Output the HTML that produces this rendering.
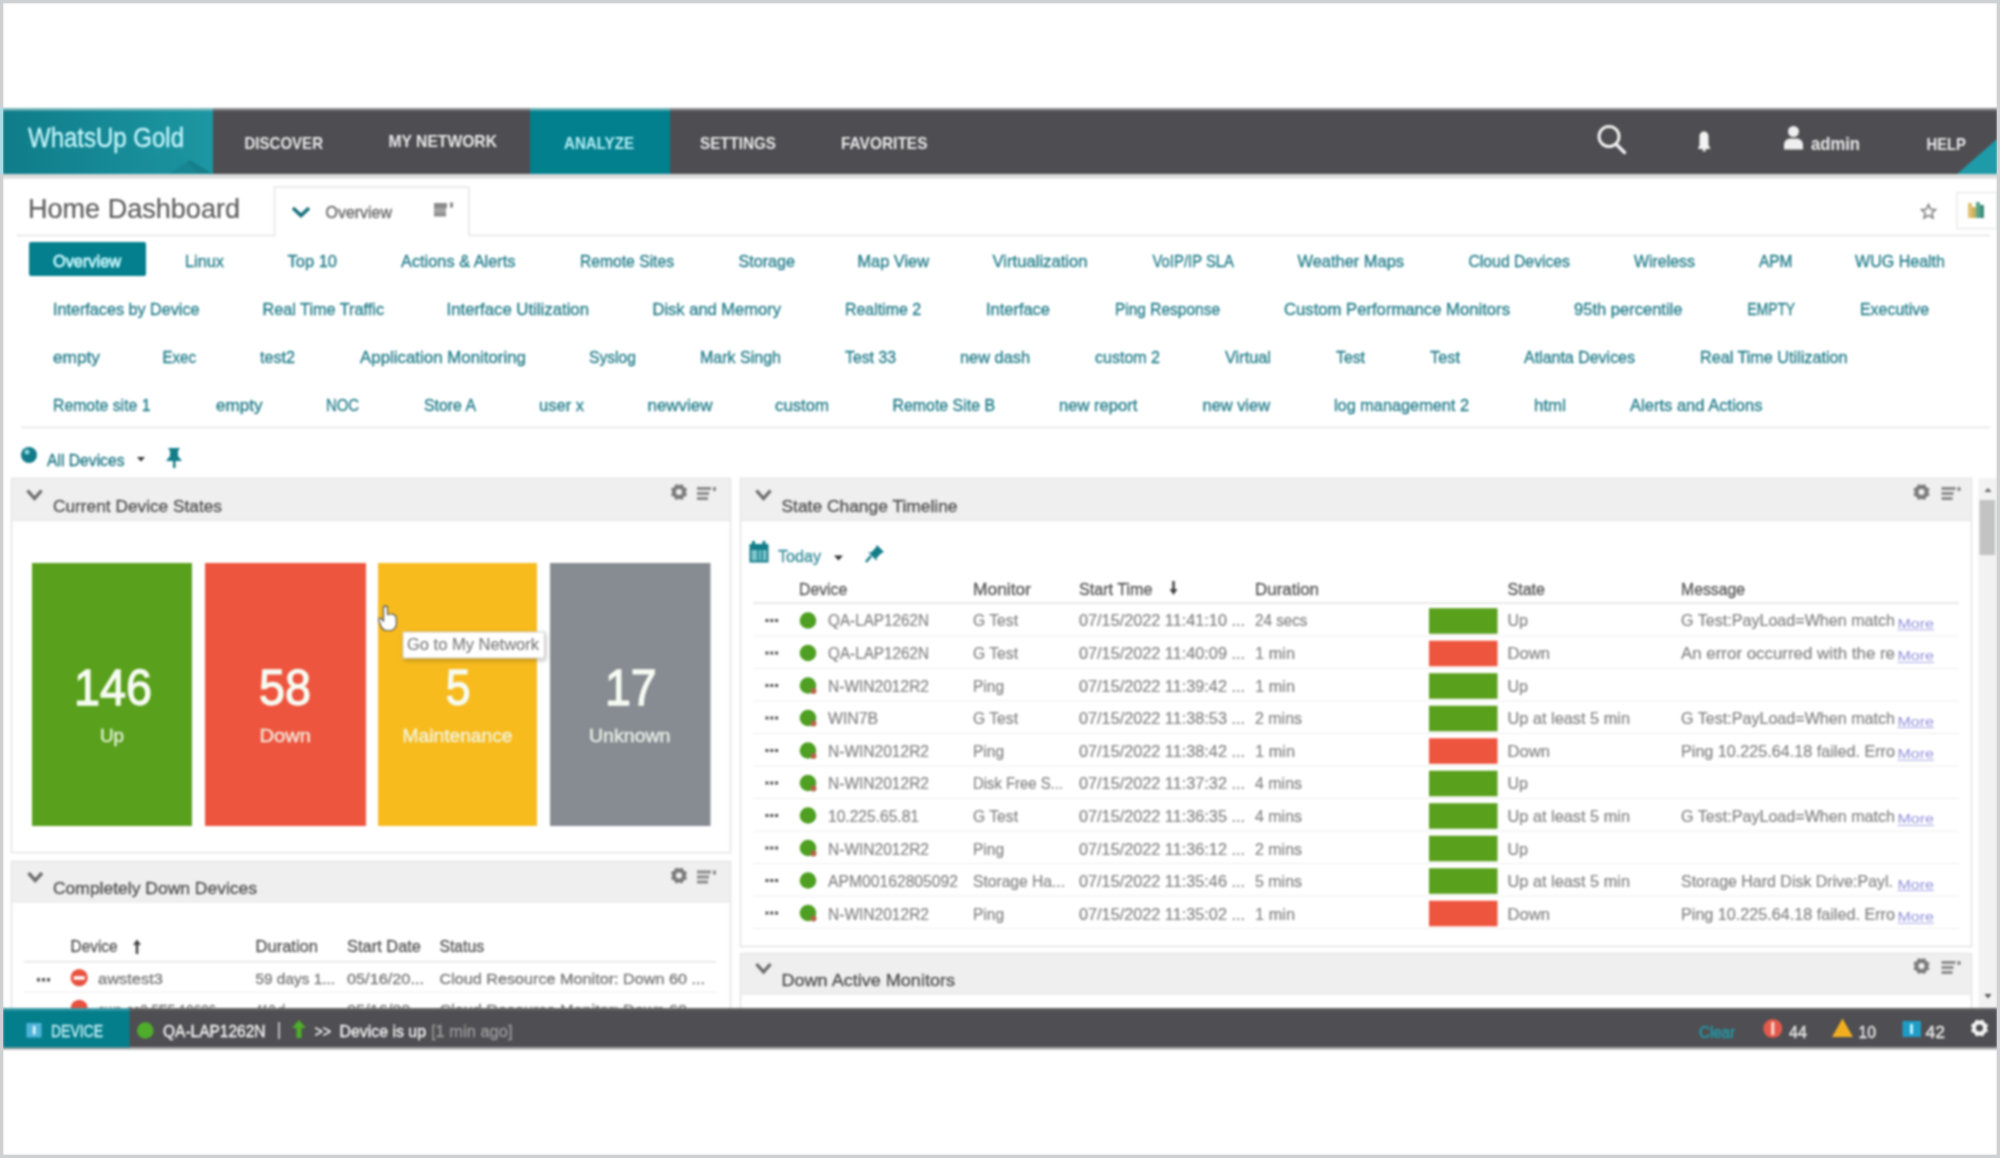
<!DOCTYPE html>
<html><head><meta charset="utf-8"><title>WhatsUp Gold - Home Dashboard</title>
<style>
html,body{margin:0;padding:0;background:#fff;overflow:hidden;width:2000px;height:1158px;position:relative;}
svg{display:block;font-family:"Liberation Sans", sans-serif;filter:blur(1px);}
.fr{position:absolute;left:0;top:0;width:1994px;height:1152px;border:3px solid #cdd1d4;}
.nl{position:absolute;left:0;top:108px;width:3px;height:66px;background:#a9dce6;}
</style></head><body>
<svg width="2000" height="1158" viewBox="0 0 2000 1158" font-family='"Liberation Sans", sans-serif'>
<rect x="0" y="0" width="2000.00" height="1158.00" fill="#ffffff"/>
<defs>
<linearGradient id="lg" x1="0" y1="0" x2="1" y2="0">
<stop offset="0" stop-color="#0f7c89"/><stop offset="1" stop-color="#1d97a3"/></linearGradient>
<filter id="sh" x="-10%" y="-20%" width="130%" height="160%"><feDropShadow dx="1" dy="2" stdDeviation="2" flood-color="#000" flood-opacity="0.25"/></filter>
</defs>
<rect x="3" y="108" width="1994.00" height="66.00" fill="#4e4d51"/>
<rect x="3" y="108" width="1994.00" height="2.50" fill="#8c8c8e"/>
<rect x="3" y="174" width="1994.00" height="4.50" fill="#dcdcdc"/>
<rect x="3" y="108" width="210.00" height="66.00" fill="url(#lg)"/>
<rect x="3" y="108" width="210.00" height="2.50" fill="#7fb9bd"/>
<polygon points="168,174 190,160 213,174" fill="#157f8b"/>
<polygon points="120,174 170,150 200,174" fill="#1a8d99" opacity="0.5"/>
<rect x="530" y="108" width="140.00" height="66.00" fill="#03808e"/>
<rect x="530" y="108" width="140.00" height="2.50" fill="#6fb3b9"/>
<polygon points="1957,174 1997,139 1997,174" fill="#1f9aa8"/>
<text x="28" y="147" font-size="27" fill="#c6f6fc" textLength="156.0" lengthAdjust="spacingAndGlyphs" stroke="#c6f6fc" stroke-width="0.3">WhatsUp Gold</text>
<text x="244.5" y="149" font-size="17" fill="#e8e8e8" font-weight="bold" textLength="78.5" lengthAdjust="spacingAndGlyphs">DISCOVER</text>
<text x="388.5" y="147.3" font-size="17" fill="#e8e8e8" font-weight="bold" textLength="108.5" lengthAdjust="spacingAndGlyphs">MY NETWORK</text>
<text x="564" y="149" font-size="17" fill="#b5eef5" font-weight="bold" textLength="70.0" lengthAdjust="spacingAndGlyphs">ANALYZE</text>
<text x="700" y="149" font-size="17" fill="#e8e8e8" font-weight="bold" textLength="76.0" lengthAdjust="spacingAndGlyphs">SETTINGS</text>
<text x="841" y="149" font-size="17" fill="#e8e8e8" font-weight="bold" textLength="86.5" lengthAdjust="spacingAndGlyphs">FAVORITES</text>
<text x="1811" y="149.5" font-size="18" fill="#e8e8e8" font-weight="bold" textLength="49.0" lengthAdjust="spacingAndGlyphs">admin</text>
<text x="1926.5" y="149.5" font-size="17" fill="#e8e8e8" font-weight="bold" textLength="39.5" lengthAdjust="spacingAndGlyphs">HELP</text>
<circle cx="1609" cy="136.5" r="10" fill="none" stroke="#f0f0f0" stroke-width="3"/>
<line x1="1616" y1="144" x2="1624.5" y2="152.5" stroke="#f0f0f0" stroke-width="3.5" stroke-linecap="round"/>
<path d="M1698,149 L1699.5,145 L1699.5,136 Q1700,131.5 1704,131.5 Q1708,131.5 1708.5,136 L1708.5,145 L1710.5,149 Z" fill="#f2f2f2"/>
<rect x="1702.5" y="149" width="3.50" height="2.50" fill="#d8d8d8"/>
<circle cx="1793.5" cy="131.5" r="5.5" fill="#eeeeee"/>
<path d="M1784,149.5 L1784,144 Q1785,139 1790,138.5 L1797,138.5 Q1802,139 1803,144 L1803,149.5 Z" fill="#eeeeee"/>
<text x="28" y="218" font-size="27" fill="#5e5e5e" textLength="212.0" lengthAdjust="spacingAndGlyphs" stroke="#5e5e5e" stroke-width="0.2">Home Dashboard</text>
<path d="M17,235.5 L274.5,235.5 L274.5,187 L469,187 L469,235.5 L1990,235.5" fill="none" stroke="#ebebeb" stroke-width="2"/>
<path d="M293,208 L301,215.5 L309,208" fill="none" stroke="#17707c" stroke-width="3.5"/>
<text x="325.5" y="218" font-size="16.5" fill="#666" textLength="66.5" lengthAdjust="spacingAndGlyphs" stroke="#666" stroke-width="0.35">Overview</text>
<rect x="434" y="203" width="13.00" height="5.00" fill="#8a8a8a"/>
<rect x="434" y="208" width="12.00" height="5.00" fill="#a5a5a5"/>
<rect x="434" y="213" width="12.00" height="3.50" fill="#8f8f8f"/>
<rect x="450" y="202.5" width="3.00" height="5.00" fill="#888"/>
<path d="M1928.5,204.5 L1930.6,209.3 L1935.5,209.7 L1931.8,213 L1933,218 L1928.5,215.3 L1924,218 L1925.2,213 L1921.5,209.7 L1926.4,209.3 Z" fill="none" stroke="#7a7a7a" stroke-width="1.5"/>
<rect x="1957" y="192.5" width="40" height="36" fill="#fff" stroke="#ebebeb" stroke-width="1.5"/>
<rect x="1968" y="203" width="4.00" height="15.00" fill="#e0c070"/>
<rect x="1972" y="207" width="4.00" height="11.00" fill="#c9b060"/>
<rect x="1976" y="202" width="4.00" height="16.00" fill="#5aa888"/>
<rect x="1980" y="205" width="4.00" height="13.00" fill="#3d8f80"/>
<rect x="29" y="242" width="117.00" height="34.00" fill="#047f8d" rx="2"/>
<text x="53" y="267" font-size="17" fill="#c4f5fb" textLength="68.0" lengthAdjust="spacingAndGlyphs" stroke="#c4f5fb" stroke-width="0.8">Overview</text>
<text x="185" y="267" font-size="17" fill="#267f8c" textLength="39.0" lengthAdjust="spacingAndGlyphs" stroke="#267f8c" stroke-width="0.35">Linux</text>
<text x="287.5" y="267" font-size="17" fill="#267f8c" textLength="49.5" lengthAdjust="spacingAndGlyphs" stroke="#267f8c" stroke-width="0.35">Top 10</text>
<text x="401" y="267" font-size="17" fill="#267f8c" textLength="114.5" lengthAdjust="spacingAndGlyphs" stroke="#267f8c" stroke-width="0.35">Actions &amp; Alerts</text>
<text x="580" y="267" font-size="17" fill="#267f8c" textLength="94.0" lengthAdjust="spacingAndGlyphs" stroke="#267f8c" stroke-width="0.35">Remote Sites</text>
<text x="738.5" y="267" font-size="17" fill="#267f8c" textLength="56.5" lengthAdjust="spacingAndGlyphs" stroke="#267f8c" stroke-width="0.35">Storage</text>
<text x="857.5" y="267" font-size="17" fill="#267f8c" textLength="71.5" lengthAdjust="spacingAndGlyphs" stroke="#267f8c" stroke-width="0.35">Map View</text>
<text x="992.5" y="267" font-size="17" fill="#267f8c" textLength="95.0" lengthAdjust="spacingAndGlyphs" stroke="#267f8c" stroke-width="0.35">Virtualization</text>
<text x="1152.5" y="267" font-size="17" fill="#267f8c" textLength="81.5" lengthAdjust="spacingAndGlyphs" stroke="#267f8c" stroke-width="0.35">VoIP/IP SLA</text>
<text x="1297.5" y="267" font-size="17" fill="#267f8c" textLength="106.5" lengthAdjust="spacingAndGlyphs" stroke="#267f8c" stroke-width="0.35">Weather Maps</text>
<text x="1468.5" y="267" font-size="17" fill="#267f8c" textLength="101.5" lengthAdjust="spacingAndGlyphs" stroke="#267f8c" stroke-width="0.35">Cloud Devices</text>
<text x="1634" y="267" font-size="17" fill="#267f8c" textLength="61.0" lengthAdjust="spacingAndGlyphs" stroke="#267f8c" stroke-width="0.35">Wireless</text>
<text x="1759" y="267" font-size="17" fill="#267f8c" textLength="33.5" lengthAdjust="spacingAndGlyphs" stroke="#267f8c" stroke-width="0.35">APM</text>
<text x="1855" y="267" font-size="17" fill="#267f8c" textLength="90.0" lengthAdjust="spacingAndGlyphs" stroke="#267f8c" stroke-width="0.35">WUG Health</text>
<text x="53" y="315" font-size="17" fill="#267f8c" textLength="146.5" lengthAdjust="spacingAndGlyphs" stroke="#267f8c" stroke-width="0.35">Interfaces by Device</text>
<text x="262.5" y="315" font-size="17" fill="#267f8c" textLength="121.5" lengthAdjust="spacingAndGlyphs" stroke="#267f8c" stroke-width="0.35">Real Time Traffic</text>
<text x="446.5" y="315" font-size="17" fill="#267f8c" textLength="142.5" lengthAdjust="spacingAndGlyphs" stroke="#267f8c" stroke-width="0.35">Interface Utilization</text>
<text x="652.5" y="315" font-size="17" fill="#267f8c" textLength="128.5" lengthAdjust="spacingAndGlyphs" stroke="#267f8c" stroke-width="0.35">Disk and Memory</text>
<text x="845" y="315" font-size="17" fill="#267f8c" textLength="76.0" lengthAdjust="spacingAndGlyphs" stroke="#267f8c" stroke-width="0.35">Realtime 2</text>
<text x="986" y="315" font-size="17" fill="#267f8c" textLength="64.0" lengthAdjust="spacingAndGlyphs" stroke="#267f8c" stroke-width="0.35">Interface</text>
<text x="1115" y="315" font-size="17" fill="#267f8c" textLength="105.0" lengthAdjust="spacingAndGlyphs" stroke="#267f8c" stroke-width="0.35">Ping Response</text>
<text x="1284" y="315" font-size="17" fill="#267f8c" textLength="226.0" lengthAdjust="spacingAndGlyphs" stroke="#267f8c" stroke-width="0.35">Custom Performance Monitors</text>
<text x="1574" y="315" font-size="17" fill="#267f8c" textLength="108.5" lengthAdjust="spacingAndGlyphs" stroke="#267f8c" stroke-width="0.35">95th percentile</text>
<text x="1747.5" y="315" font-size="17" fill="#267f8c" textLength="47.5" lengthAdjust="spacingAndGlyphs" stroke="#267f8c" stroke-width="0.35">EMPTY</text>
<text x="1860" y="315" font-size="17" fill="#267f8c" textLength="69.0" lengthAdjust="spacingAndGlyphs" stroke="#267f8c" stroke-width="0.35">Executive</text>
<text x="53" y="363" font-size="17" fill="#267f8c" textLength="47.0" lengthAdjust="spacingAndGlyphs" stroke="#267f8c" stroke-width="0.35">empty</text>
<text x="162.5" y="363" font-size="17" fill="#267f8c" textLength="33.5" lengthAdjust="spacingAndGlyphs" stroke="#267f8c" stroke-width="0.35">Exec</text>
<text x="260" y="363" font-size="17" fill="#267f8c" textLength="35.0" lengthAdjust="spacingAndGlyphs" stroke="#267f8c" stroke-width="0.35">test2</text>
<text x="360" y="363" font-size="17" fill="#267f8c" textLength="166.0" lengthAdjust="spacingAndGlyphs" stroke="#267f8c" stroke-width="0.35">Application Monitoring</text>
<text x="589" y="363" font-size="17" fill="#267f8c" textLength="47.0" lengthAdjust="spacingAndGlyphs" stroke="#267f8c" stroke-width="0.35">Syslog</text>
<text x="700" y="363" font-size="17" fill="#267f8c" textLength="81.0" lengthAdjust="spacingAndGlyphs" stroke="#267f8c" stroke-width="0.35">Mark Singh</text>
<text x="845" y="363" font-size="17" fill="#267f8c" textLength="51.0" lengthAdjust="spacingAndGlyphs" stroke="#267f8c" stroke-width="0.35">Test 33</text>
<text x="960" y="363" font-size="17" fill="#267f8c" textLength="70.0" lengthAdjust="spacingAndGlyphs" stroke="#267f8c" stroke-width="0.35">new dash</text>
<text x="1095" y="363" font-size="17" fill="#267f8c" textLength="65.0" lengthAdjust="spacingAndGlyphs" stroke="#267f8c" stroke-width="0.35">custom 2</text>
<text x="1225" y="363" font-size="17" fill="#267f8c" textLength="46.0" lengthAdjust="spacingAndGlyphs" stroke="#267f8c" stroke-width="0.35">Virtual</text>
<text x="1336" y="363" font-size="17" fill="#267f8c" textLength="29.0" lengthAdjust="spacingAndGlyphs" stroke="#267f8c" stroke-width="0.35">Test</text>
<text x="1430" y="363" font-size="17" fill="#267f8c" textLength="30.0" lengthAdjust="spacingAndGlyphs" stroke="#267f8c" stroke-width="0.35">Test</text>
<text x="1524" y="363" font-size="17" fill="#267f8c" textLength="111.0" lengthAdjust="spacingAndGlyphs" stroke="#267f8c" stroke-width="0.35">Atlanta Devices</text>
<text x="1700" y="363" font-size="17" fill="#267f8c" textLength="147.5" lengthAdjust="spacingAndGlyphs" stroke="#267f8c" stroke-width="0.35">Real Time Utilization</text>
<text x="53" y="411" font-size="17" fill="#267f8c" textLength="97.5" lengthAdjust="spacingAndGlyphs" stroke="#267f8c" stroke-width="0.35">Remote site 1</text>
<text x="216" y="411" font-size="17" fill="#267f8c" textLength="46.5" lengthAdjust="spacingAndGlyphs" stroke="#267f8c" stroke-width="0.35">empty</text>
<text x="326" y="411" font-size="17" fill="#267f8c" textLength="33.0" lengthAdjust="spacingAndGlyphs" stroke="#267f8c" stroke-width="0.35">NOC</text>
<text x="424" y="411" font-size="17" fill="#267f8c" textLength="52.0" lengthAdjust="spacingAndGlyphs" stroke="#267f8c" stroke-width="0.35">Store A</text>
<text x="539" y="411" font-size="17" fill="#267f8c" textLength="45.0" lengthAdjust="spacingAndGlyphs" stroke="#267f8c" stroke-width="0.35">user x</text>
<text x="647.5" y="411" font-size="17" fill="#267f8c" textLength="65.0" lengthAdjust="spacingAndGlyphs" stroke="#267f8c" stroke-width="0.35">newview</text>
<text x="775" y="411" font-size="17" fill="#267f8c" textLength="54.0" lengthAdjust="spacingAndGlyphs" stroke="#267f8c" stroke-width="0.35">custom</text>
<text x="892.5" y="411" font-size="17" fill="#267f8c" textLength="102.5" lengthAdjust="spacingAndGlyphs" stroke="#267f8c" stroke-width="0.35">Remote Site B</text>
<text x="1059" y="411" font-size="17" fill="#267f8c" textLength="78.5" lengthAdjust="spacingAndGlyphs" stroke="#267f8c" stroke-width="0.35">new report</text>
<text x="1202.5" y="411" font-size="17" fill="#267f8c" textLength="67.5" lengthAdjust="spacingAndGlyphs" stroke="#267f8c" stroke-width="0.35">new view</text>
<text x="1334" y="411" font-size="17" fill="#267f8c" textLength="135.0" lengthAdjust="spacingAndGlyphs" stroke="#267f8c" stroke-width="0.35">log management 2</text>
<text x="1534" y="411" font-size="17" fill="#267f8c" textLength="32.0" lengthAdjust="spacingAndGlyphs" stroke="#267f8c" stroke-width="0.35">html</text>
<text x="1630" y="411" font-size="17" fill="#267f8c" textLength="132.5" lengthAdjust="spacingAndGlyphs" stroke="#267f8c" stroke-width="0.35">Alerts and Actions</text>
<line x1="21" y1="427.5" x2="1990" y2="427.5" stroke="#ececec" stroke-width="2"/>
<circle cx="29" cy="455" r="8" fill="#127b88"/>
<circle cx="27" cy="452" r="2.5" fill="#8fd8df"/>
<text x="47" y="465.5" font-size="16.5" fill="#217a88" textLength="77.5" lengthAdjust="spacingAndGlyphs" stroke="#217a88" stroke-width="0.35">All Devices</text>
<polygon points="137,457 145,457 141,461.5" fill="#333"/>
<path d="M168,448 L180,448 L178,451 L178,456 L182,461 L166,461 L170,456 L170,451 Z" fill="#137d8a"/><rect x="173" y="461" width="2.5" height="7" fill="#137d8a"/>
<rect x="11.5" y="478.5" width="719" height="374" fill="#fff" stroke="#e3e3e3" stroke-width="1.5"/>
<rect x="12" y="479" width="718.00" height="41.50" fill="#efefef"/>
<line x1="12" y1="520.5" x2="730" y2="520.5" stroke="#e6e6e6" stroke-width="1"/>
<path d="M27.5,490.5 L34.5,498.5 L41.5,490.5" fill="none" stroke="#6e6e6e" stroke-width="3.4"/>
<text x="53" y="512.4" font-size="16.5" fill="#555" textLength="169.0" lengthAdjust="spacingAndGlyphs" stroke="#555" stroke-width="0.35">Current Device States</text>
<circle cx="679" cy="492" r="5.10" fill="none" stroke="#7c7c7c" stroke-width="4.2"/>
<circle cx="685.37" cy="494.64" r="1.5" fill="#7c7c7c"/>
<circle cx="681.64" cy="498.37" r="1.5" fill="#7c7c7c"/>
<circle cx="676.36" cy="498.37" r="1.5" fill="#7c7c7c"/>
<circle cx="672.63" cy="494.64" r="1.5" fill="#7c7c7c"/>
<circle cx="672.63" cy="489.36" r="1.5" fill="#7c7c7c"/>
<circle cx="676.36" cy="485.63" r="1.5" fill="#7c7c7c"/>
<circle cx="681.64" cy="485.63" r="1.5" fill="#7c7c7c"/>
<circle cx="685.37" cy="489.36" r="1.5" fill="#7c7c7c"/>
<rect x="697" y="487.0" width="14.00" height="3.00" fill="#8a8a8a"/>
<rect x="697" y="492.0" width="12.00" height="3.00" fill="#8a8a8a"/>
<rect x="697" y="497.0" width="11.00" height="3.00" fill="#8a8a8a"/>
<rect x="713" y="487.0" width="3.00" height="4.00" fill="#8a8a8a"/>
<rect x="32" y="563" width="160.00" height="263.00" fill="#59a01c"/>
<text x="74" y="704.6" font-size="50" fill="#f6fbf2" textLength="78.0" lengthAdjust="spacingAndGlyphs" stroke="#f6fbf2" stroke-width="1.3">146</text>
<text x="100" y="741.6" font-size="18" fill="#f2f9ee" textLength="24.0" lengthAdjust="spacingAndGlyphs" opacity="0.88" stroke="#f2f9ee" stroke-width="0.45">Up</text>
<rect x="205" y="563" width="161.00" height="263.00" fill="#ee553e"/>
<text x="259" y="704.6" font-size="50" fill="#f6fbf2" textLength="52.0" lengthAdjust="spacingAndGlyphs" stroke="#f6fbf2" stroke-width="1.3">58</text>
<text x="259.5" y="741.6" font-size="18" fill="#f2f9ee" textLength="51.5" lengthAdjust="spacingAndGlyphs" opacity="0.88" stroke="#f2f9ee" stroke-width="0.45">Down</text>
<rect x="378" y="563" width="159.00" height="263.00" fill="#f7bb1e"/>
<text x="445.8" y="704.6" font-size="50" fill="#f6fbf2" textLength="24.8" lengthAdjust="spacingAndGlyphs" stroke="#f6fbf2" stroke-width="1.3">5</text>
<text x="402.5" y="741.6" font-size="18" fill="#f2f9ee" textLength="110.0" lengthAdjust="spacingAndGlyphs" opacity="0.88" stroke="#f2f9ee" stroke-width="0.45">Maintenance</text>
<rect x="550" y="563" width="160.50" height="263.00" fill="#878c93"/>
<text x="605" y="704.6" font-size="50" fill="#f6fbf2" textLength="51.7" lengthAdjust="spacingAndGlyphs" stroke="#f6fbf2" stroke-width="1.3">17</text>
<text x="589" y="741.6" font-size="18" fill="#f2f9ee" textLength="81.5" lengthAdjust="spacingAndGlyphs" opacity="0.88" stroke="#f2f9ee" stroke-width="0.45">Unknown</text>
<rect x="403" y="632" width="141.5" height="26" fill="#fff" stroke="#cfcfcf" stroke-width="1" filter="url(#sh)"/>
<text x="407" y="649.8" font-size="16.5" fill="#7a7a7a" textLength="132.0" lengthAdjust="spacingAndGlyphs" stroke="#7a7a7a" stroke-width="0.1">Go to My Network</text>
<path d="M383.5,607 Q385.5,605 387.5,607 L387.5,614.5 L391,614 Q393,613.5 394,615 L396,616 L396.5,624 Q395.5,629.5 391,630.5 L385.5,630.5 Q381.5,629 380.5,625 L378.5,620 Q378.5,617.5 381,618.5 L383.5,621 Z" fill="#fff" stroke="#555" stroke-width="1.2"/>
<rect x="11.5" y="861.5" width="719" height="148" fill="#fff" stroke="#e3e3e3" stroke-width="1.5"/>
<rect x="12" y="862" width="718.00" height="40.00" fill="#efefef"/>
<line x1="12" y1="902" x2="730" y2="902" stroke="#e6e6e6" stroke-width="1"/>
<path d="M28.5,873.0 L35.25,880.5 L42.0,873.0" fill="none" stroke="#6e6e6e" stroke-width="3.4"/>
<text x="53" y="894.4" font-size="16.5" fill="#555" textLength="204.0" lengthAdjust="spacingAndGlyphs" stroke="#555" stroke-width="0.35">Completely Down Devices</text>
<circle cx="679" cy="875.5" r="5.10" fill="none" stroke="#7c7c7c" stroke-width="4.2"/>
<circle cx="685.37" cy="878.14" r="1.5" fill="#7c7c7c"/>
<circle cx="681.64" cy="881.87" r="1.5" fill="#7c7c7c"/>
<circle cx="676.36" cy="881.87" r="1.5" fill="#7c7c7c"/>
<circle cx="672.63" cy="878.14" r="1.5" fill="#7c7c7c"/>
<circle cx="672.63" cy="872.86" r="1.5" fill="#7c7c7c"/>
<circle cx="676.36" cy="869.13" r="1.5" fill="#7c7c7c"/>
<circle cx="681.64" cy="869.13" r="1.5" fill="#7c7c7c"/>
<circle cx="685.37" cy="872.86" r="1.5" fill="#7c7c7c"/>
<rect x="697" y="870.5" width="14.00" height="3.00" fill="#8a8a8a"/>
<rect x="697" y="875.5" width="12.00" height="3.00" fill="#8a8a8a"/>
<rect x="697" y="880.5" width="11.00" height="3.00" fill="#8a8a8a"/>
<rect x="713" y="870.5" width="3.00" height="4.00" fill="#8a8a8a"/>
<text x="70.5" y="952.3" font-size="16.5" fill="#5a5a5a" textLength="47.1" lengthAdjust="spacingAndGlyphs" stroke="#5a5a5a" stroke-width="0.35">Device</text>
<path d="M137,941 L137,954" stroke="#444" stroke-width="2.5"/><path d="M133,945 L137,939.5 L141,945" fill="#444"/>
<text x="255.5" y="952.3" font-size="16.5" fill="#5a5a5a" textLength="62.5" lengthAdjust="spacingAndGlyphs" stroke="#5a5a5a" stroke-width="0.35">Duration</text>
<text x="347" y="952.3" font-size="16.5" fill="#5a5a5a" textLength="74.0" lengthAdjust="spacingAndGlyphs" stroke="#5a5a5a" stroke-width="0.35">Start Date</text>
<text x="439.5" y="952.3" font-size="16.5" fill="#5a5a5a" textLength="44.5" lengthAdjust="spacingAndGlyphs" stroke="#5a5a5a" stroke-width="0.35">Status</text>
<line x1="24" y1="961.7" x2="716" y2="961.7" stroke="#e4e4e4" stroke-width="1.5"/>
<rect x="37" y="978" width="3.00" height="3.50" fill="#555"/>
<rect x="42" y="978" width="3.00" height="3.50" fill="#555"/>
<rect x="47" y="978" width="3.00" height="3.50" fill="#555"/>
<circle cx="79.2" cy="977.7" r="8.6" fill="#e8503f"/>
<rect x="73.7" y="976.2" width="11.00" height="3.50" fill="#fff"/>
<text x="98" y="984.2" font-size="15.5" fill="#7a7a7a" textLength="65.0" lengthAdjust="spacingAndGlyphs" stroke="#7a7a7a" stroke-width="0.35">awstest3</text>
<text x="255.5" y="984.2" font-size="15.5" fill="#7a7a7a" textLength="79.5" lengthAdjust="spacingAndGlyphs" stroke="#7a7a7a" stroke-width="0.35">59 days 1...</text>
<text x="347" y="984.2" font-size="15.5" fill="#7a7a7a" textLength="77.0" lengthAdjust="spacingAndGlyphs" stroke="#7a7a7a" stroke-width="0.35">05/16/20...</text>
<text x="439.5" y="984.2" font-size="15.5" fill="#7a7a7a" textLength="265.5" lengthAdjust="spacingAndGlyphs" stroke="#7a7a7a" stroke-width="0.35">Cloud Resource Monitor: Down 60 ...</text>
<line x1="24" y1="992.4" x2="716" y2="992.4" stroke="#ececec" stroke-width="1"/>
<circle cx="79.2" cy="1008.4" r="8.6" fill="#e8503f"/>
<text x="98" y="1015" font-size="15.5" fill="#7a7a7a" textLength="118.0" lengthAdjust="spacingAndGlyphs" stroke="#7a7a7a" stroke-width="0.35">aws-ec2 5E5 10626</text>
<text x="255.5" y="1015" font-size="15.5" fill="#7a7a7a" textLength="39.5" lengthAdjust="spacingAndGlyphs" stroke="#7a7a7a" stroke-width="0.35">418 d...</text>
<text x="347" y="1015" font-size="15.5" fill="#7a7a7a" textLength="77.0" lengthAdjust="spacingAndGlyphs" stroke="#7a7a7a" stroke-width="0.35">05/16/20...</text>
<text x="439.5" y="1015" font-size="15.5" fill="#7a7a7a" textLength="265.5" lengthAdjust="spacingAndGlyphs" stroke="#7a7a7a" stroke-width="0.35">Cloud Resource Monitor: Down 60 ...</text>
<rect x="740.5" y="478.5" width="1231" height="468" fill="#fff" stroke="#e3e3e3" stroke-width="1.5"/>
<rect x="741" y="479" width="1230.00" height="41.50" fill="#efefef"/>
<line x1="741" y1="520.5" x2="1971" y2="520.5" stroke="#e6e6e6" stroke-width="1"/>
<path d="M756.5,490.5 L763.5,498.5 L770.5,490.5" fill="none" stroke="#6e6e6e" stroke-width="3.4"/>
<text x="781.5" y="512.2" font-size="16.5" fill="#555" textLength="176.0" lengthAdjust="spacingAndGlyphs" stroke="#555" stroke-width="0.35">State Change Timeline</text>
<circle cx="1921.5" cy="492" r="5.10" fill="none" stroke="#7c7c7c" stroke-width="4.2"/>
<circle cx="1927.87" cy="494.64" r="1.5" fill="#7c7c7c"/>
<circle cx="1924.14" cy="498.37" r="1.5" fill="#7c7c7c"/>
<circle cx="1918.86" cy="498.37" r="1.5" fill="#7c7c7c"/>
<circle cx="1915.13" cy="494.64" r="1.5" fill="#7c7c7c"/>
<circle cx="1915.13" cy="489.36" r="1.5" fill="#7c7c7c"/>
<circle cx="1918.86" cy="485.63" r="1.5" fill="#7c7c7c"/>
<circle cx="1924.14" cy="485.63" r="1.5" fill="#7c7c7c"/>
<circle cx="1927.87" cy="489.36" r="1.5" fill="#7c7c7c"/>
<rect x="1941.5" y="487.0" width="14.00" height="3.00" fill="#8a8a8a"/>
<rect x="1941.5" y="492.0" width="12.00" height="3.00" fill="#8a8a8a"/>
<rect x="1941.5" y="497.0" width="11.00" height="3.00" fill="#8a8a8a"/>
<rect x="1957.5" y="487.0" width="3.00" height="4.00" fill="#8a8a8a"/>
<rect x="749.5" y="544" width="19.00" height="18.50" fill="#137d8a"/>
<rect x="752" y="541" width="3.00" height="5.00" fill="#137d8a"/>
<rect x="762.5" y="541" width="3.00" height="5.00" fill="#137d8a"/>
<rect x="751.5" y="550" width="15.00" height="10.50" fill="#7fc6cd"/>
<rect x="757.2" y="550" width="1.60" height="10.50" fill="#137d8a"/>
<rect x="761.2" y="550" width="1.60" height="10.50" fill="#137d8a"/>
<text x="778" y="562.2" font-size="16.5" fill="#3a8f9b" textLength="43.0" lengthAdjust="spacingAndGlyphs" stroke="#3a8f9b" stroke-width="0.35">Today</text>
<polygon points="834,555.5 843,555.5 838.5,560.5" fill="#333"/>
<path d="M877,545 L884,552 L881,553.5 L876.5,558 L877,561 L868,552 L871,552.5 L875.5,548 Z" fill="#137d8a"/><path d="M871,556 L866,562" stroke="#137d8a" stroke-width="2.5"/>
<text x="799" y="594.5" font-size="16.5" fill="#5a5a5a" textLength="48.2" lengthAdjust="spacingAndGlyphs" stroke="#5a5a5a" stroke-width="0.35">Device</text>
<text x="973" y="594.5" font-size="16.5" fill="#5a5a5a" textLength="58.0" lengthAdjust="spacingAndGlyphs" stroke="#5a5a5a" stroke-width="0.35">Monitor</text>
<text x="1079" y="594.5" font-size="16.5" fill="#5a5a5a" textLength="73.5" lengthAdjust="spacingAndGlyphs" stroke="#5a5a5a" stroke-width="0.35">Start Time</text>
<path d="M1173.5,581 L1173.5,593" stroke="#444" stroke-width="2.5"/><path d="M1169.5,589 L1173.5,595 L1177.5,589" fill="#444"/>
<text x="1255" y="594.5" font-size="16.5" fill="#5a5a5a" textLength="64.0" lengthAdjust="spacingAndGlyphs" stroke="#5a5a5a" stroke-width="0.35">Duration</text>
<text x="1507.5" y="594.5" font-size="16.5" fill="#5a5a5a" textLength="37.5" lengthAdjust="spacingAndGlyphs" stroke="#5a5a5a" stroke-width="0.35">State</text>
<text x="1681" y="594.5" font-size="16.5" fill="#5a5a5a" textLength="64.0" lengthAdjust="spacingAndGlyphs" stroke="#5a5a5a" stroke-width="0.35">Message</text>
<line x1="753" y1="603" x2="1959" y2="603" stroke="#e2e2e2" stroke-width="1.5"/>
<rect x="765.5" y="619.0" width="3.00" height="3.00" fill="#555"/>
<rect x="770.3" y="619.0" width="3.00" height="3.00" fill="#555"/>
<rect x="775.1" y="619.0" width="3.00" height="3.00" fill="#555"/>
<circle cx="808" cy="620.50" r="8.3" fill="#4e9f22"/>
<text x="828" y="626.3" font-size="16.5" fill="#858585" textLength="101.0" lengthAdjust="spacingAndGlyphs" stroke="#858585" stroke-width="0.22">QA-LAP1262N</text>
<text x="973" y="626.3" font-size="16.5" fill="#858585" textLength="45.0" lengthAdjust="spacingAndGlyphs" stroke="#858585" stroke-width="0.22">G Test</text>
<text x="1079" y="626.3" font-size="16.5" fill="#858585" textLength="166.0" lengthAdjust="spacingAndGlyphs" stroke="#858585" stroke-width="0.22">07/15/2022 11:41:10 ...</text>
<text x="1255" y="626.3" font-size="16.5" fill="#858585" textLength="52.5" lengthAdjust="spacingAndGlyphs" stroke="#858585" stroke-width="0.22">24 secs</text>
<rect x="1429" y="608.2" width="68.50" height="25.60" fill="#59a01c"/>
<text x="1507.5" y="626.3" font-size="16.5" fill="#858585" textLength="20.5" lengthAdjust="spacingAndGlyphs" stroke="#858585" stroke-width="0.22">Up</text>
<text x="1681" y="626.3" font-size="16.5" fill="#858585" textLength="214.0" lengthAdjust="spacingAndGlyphs" stroke="#858585" stroke-width="0.22">G Test:PayLoad=When match</text>
<text x="1897.5" y="627.8" font-size="13.5" fill="#9090dc" textLength="36.5" lengthAdjust="spacingAndGlyphs">More</text>
<line x1="1897.5" y1="629.8" x2="1934" y2="629.8" stroke="#a5a5e5" stroke-width="1"/>
<line x1="753" y1="636.0" x2="1959" y2="636.0" stroke="#eeeeee" stroke-width="1"/>
<rect x="765.5" y="651.5" width="3.00" height="3.00" fill="#555"/>
<rect x="770.3" y="651.5" width="3.00" height="3.00" fill="#555"/>
<rect x="775.1" y="651.5" width="3.00" height="3.00" fill="#555"/>
<circle cx="808" cy="653.00" r="8.3" fill="#4e9f22"/>
<text x="828" y="658.9" font-size="16.5" fill="#858585" textLength="101.0" lengthAdjust="spacingAndGlyphs" stroke="#858585" stroke-width="0.22">QA-LAP1262N</text>
<text x="973" y="658.9" font-size="16.5" fill="#858585" textLength="45.0" lengthAdjust="spacingAndGlyphs" stroke="#858585" stroke-width="0.22">G Test</text>
<text x="1079" y="658.9" font-size="16.5" fill="#858585" textLength="166.0" lengthAdjust="spacingAndGlyphs" stroke="#858585" stroke-width="0.22">07/15/2022 11:40:09 ...</text>
<text x="1255" y="658.9" font-size="16.5" fill="#858585" textLength="40.0" lengthAdjust="spacingAndGlyphs" stroke="#858585" stroke-width="0.22">1 min</text>
<rect x="1429" y="640.7" width="68.50" height="25.60" fill="#ee553e"/>
<text x="1507.5" y="658.9" font-size="16.5" fill="#858585" textLength="42.5" lengthAdjust="spacingAndGlyphs" stroke="#858585" stroke-width="0.22">Down</text>
<text x="1681" y="658.9" font-size="16.5" fill="#858585" textLength="214.0" lengthAdjust="spacingAndGlyphs" stroke="#858585" stroke-width="0.22">An error occurred with the re</text>
<text x="1897.5" y="660.4" font-size="13.5" fill="#9090dc" textLength="36.5" lengthAdjust="spacingAndGlyphs">More</text>
<line x1="1897.5" y1="662.4" x2="1934" y2="662.4" stroke="#a5a5e5" stroke-width="1"/>
<line x1="753" y1="668.5" x2="1959" y2="668.5" stroke="#eeeeee" stroke-width="1"/>
<rect x="765.5" y="684.0" width="3.00" height="3.00" fill="#555"/>
<rect x="770.3" y="684.0" width="3.00" height="3.00" fill="#555"/>
<rect x="775.1" y="684.0" width="3.00" height="3.00" fill="#555"/>
<circle cx="808" cy="685.50" r="8.3" fill="#4e9f22"/>
<circle cx="813.5" cy="691.00" r="3" fill="#b5654a"/>
<text x="828" y="691.5" font-size="16.5" fill="#858585" textLength="101.0" lengthAdjust="spacingAndGlyphs" stroke="#858585" stroke-width="0.22">N-WIN2012R2</text>
<text x="973" y="691.5" font-size="16.5" fill="#858585" textLength="31.0" lengthAdjust="spacingAndGlyphs" stroke="#858585" stroke-width="0.22">Ping</text>
<text x="1079" y="691.5" font-size="16.5" fill="#858585" textLength="166.0" lengthAdjust="spacingAndGlyphs" stroke="#858585" stroke-width="0.22">07/15/2022 11:39:42 ...</text>
<text x="1255" y="691.5" font-size="16.5" fill="#858585" textLength="40.0" lengthAdjust="spacingAndGlyphs" stroke="#858585" stroke-width="0.22">1 min</text>
<rect x="1429" y="673.2" width="68.50" height="25.60" fill="#59a01c"/>
<text x="1507.5" y="691.5" font-size="16.5" fill="#858585" textLength="20.5" lengthAdjust="spacingAndGlyphs" stroke="#858585" stroke-width="0.22">Up</text>
<line x1="753" y1="701.0" x2="1959" y2="701.0" stroke="#eeeeee" stroke-width="1"/>
<rect x="765.5" y="716.5" width="3.00" height="3.00" fill="#555"/>
<rect x="770.3" y="716.5" width="3.00" height="3.00" fill="#555"/>
<rect x="775.1" y="716.5" width="3.00" height="3.00" fill="#555"/>
<circle cx="808" cy="718.00" r="8.3" fill="#4e9f22"/>
<circle cx="813.5" cy="723.50" r="3" fill="#b5654a"/>
<text x="828" y="724.1" font-size="16.5" fill="#858585" textLength="50.0" lengthAdjust="spacingAndGlyphs" stroke="#858585" stroke-width="0.22">WIN7B</text>
<text x="973" y="724.1" font-size="16.5" fill="#858585" textLength="45.0" lengthAdjust="spacingAndGlyphs" stroke="#858585" stroke-width="0.22">G Test</text>
<text x="1079" y="724.1" font-size="16.5" fill="#858585" textLength="166.0" lengthAdjust="spacingAndGlyphs" stroke="#858585" stroke-width="0.22">07/15/2022 11:38:53 ...</text>
<text x="1255" y="724.1" font-size="16.5" fill="#858585" textLength="47.0" lengthAdjust="spacingAndGlyphs" stroke="#858585" stroke-width="0.22">2 mins</text>
<rect x="1429" y="705.7" width="68.50" height="25.60" fill="#59a01c"/>
<text x="1507.5" y="724.1" font-size="16.5" fill="#858585" textLength="122.5" lengthAdjust="spacingAndGlyphs" stroke="#858585" stroke-width="0.22">Up at least 5 min</text>
<text x="1681" y="724.1" font-size="16.5" fill="#858585" textLength="214.0" lengthAdjust="spacingAndGlyphs" stroke="#858585" stroke-width="0.22">G Test:PayLoad=When match</text>
<text x="1897.5" y="725.6" font-size="13.5" fill="#9090dc" textLength="36.5" lengthAdjust="spacingAndGlyphs">More</text>
<line x1="1897.5" y1="727.5999999999999" x2="1934" y2="727.5999999999999" stroke="#a5a5e5" stroke-width="1"/>
<line x1="753" y1="733.5" x2="1959" y2="733.5" stroke="#eeeeee" stroke-width="1"/>
<rect x="765.5" y="749.0" width="3.00" height="3.00" fill="#555"/>
<rect x="770.3" y="749.0" width="3.00" height="3.00" fill="#555"/>
<rect x="775.1" y="749.0" width="3.00" height="3.00" fill="#555"/>
<circle cx="808" cy="750.50" r="8.3" fill="#4e9f22"/>
<circle cx="813.5" cy="756.00" r="3" fill="#b5654a"/>
<text x="828" y="756.7" font-size="16.5" fill="#858585" textLength="101.0" lengthAdjust="spacingAndGlyphs" stroke="#858585" stroke-width="0.22">N-WIN2012R2</text>
<text x="973" y="756.7" font-size="16.5" fill="#858585" textLength="31.0" lengthAdjust="spacingAndGlyphs" stroke="#858585" stroke-width="0.22">Ping</text>
<text x="1079" y="756.7" font-size="16.5" fill="#858585" textLength="166.0" lengthAdjust="spacingAndGlyphs" stroke="#858585" stroke-width="0.22">07/15/2022 11:38:42 ...</text>
<text x="1255" y="756.7" font-size="16.5" fill="#858585" textLength="40.0" lengthAdjust="spacingAndGlyphs" stroke="#858585" stroke-width="0.22">1 min</text>
<rect x="1429" y="738.2" width="68.50" height="25.60" fill="#ee553e"/>
<text x="1507.5" y="756.7" font-size="16.5" fill="#858585" textLength="42.5" lengthAdjust="spacingAndGlyphs" stroke="#858585" stroke-width="0.22">Down</text>
<text x="1681" y="756.7" font-size="16.5" fill="#858585" textLength="214.0" lengthAdjust="spacingAndGlyphs" stroke="#858585" stroke-width="0.22">Ping 10.225.64.18 failed. Erro</text>
<text x="1897.5" y="758.2" font-size="13.5" fill="#9090dc" textLength="36.5" lengthAdjust="spacingAndGlyphs">More</text>
<line x1="1897.5" y1="760.1999999999999" x2="1934" y2="760.1999999999999" stroke="#a5a5e5" stroke-width="1"/>
<line x1="753" y1="766.0" x2="1959" y2="766.0" stroke="#eeeeee" stroke-width="1"/>
<rect x="765.5" y="781.5" width="3.00" height="3.00" fill="#555"/>
<rect x="770.3" y="781.5" width="3.00" height="3.00" fill="#555"/>
<rect x="775.1" y="781.5" width="3.00" height="3.00" fill="#555"/>
<circle cx="808" cy="783.00" r="8.3" fill="#4e9f22"/>
<circle cx="813.5" cy="788.50" r="3" fill="#b5654a"/>
<text x="828" y="789.3" font-size="16.5" fill="#858585" textLength="101.0" lengthAdjust="spacingAndGlyphs" stroke="#858585" stroke-width="0.22">N-WIN2012R2</text>
<text x="973" y="789.3" font-size="16.5" fill="#858585" textLength="90.0" lengthAdjust="spacingAndGlyphs" stroke="#858585" stroke-width="0.22">Disk Free S...</text>
<text x="1079" y="789.3" font-size="16.5" fill="#858585" textLength="166.0" lengthAdjust="spacingAndGlyphs" stroke="#858585" stroke-width="0.22">07/15/2022 11:37:32 ...</text>
<text x="1255" y="789.3" font-size="16.5" fill="#858585" textLength="47.0" lengthAdjust="spacingAndGlyphs" stroke="#858585" stroke-width="0.22">4 mins</text>
<rect x="1429" y="770.7" width="68.50" height="25.60" fill="#59a01c"/>
<text x="1507.5" y="789.3" font-size="16.5" fill="#858585" textLength="20.5" lengthAdjust="spacingAndGlyphs" stroke="#858585" stroke-width="0.22">Up</text>
<line x1="753" y1="798.5" x2="1959" y2="798.5" stroke="#eeeeee" stroke-width="1"/>
<rect x="765.5" y="814.0" width="3.00" height="3.00" fill="#555"/>
<rect x="770.3" y="814.0" width="3.00" height="3.00" fill="#555"/>
<rect x="775.1" y="814.0" width="3.00" height="3.00" fill="#555"/>
<circle cx="808" cy="815.50" r="8.3" fill="#4e9f22"/>
<text x="828" y="821.9" font-size="16.5" fill="#858585" textLength="91.0" lengthAdjust="spacingAndGlyphs" stroke="#858585" stroke-width="0.22">10.225.65.81</text>
<text x="973" y="821.9" font-size="16.5" fill="#858585" textLength="45.0" lengthAdjust="spacingAndGlyphs" stroke="#858585" stroke-width="0.22">G Test</text>
<text x="1079" y="821.9" font-size="16.5" fill="#858585" textLength="166.0" lengthAdjust="spacingAndGlyphs" stroke="#858585" stroke-width="0.22">07/15/2022 11:36:35 ...</text>
<text x="1255" y="821.9" font-size="16.5" fill="#858585" textLength="47.0" lengthAdjust="spacingAndGlyphs" stroke="#858585" stroke-width="0.22">4 mins</text>
<rect x="1429" y="803.2" width="68.50" height="25.60" fill="#59a01c"/>
<text x="1507.5" y="821.9" font-size="16.5" fill="#858585" textLength="122.5" lengthAdjust="spacingAndGlyphs" stroke="#858585" stroke-width="0.22">Up at least 5 min</text>
<text x="1681" y="821.9" font-size="16.5" fill="#858585" textLength="214.0" lengthAdjust="spacingAndGlyphs" stroke="#858585" stroke-width="0.22">G Test:PayLoad=When match</text>
<text x="1897.5" y="823.4" font-size="13.5" fill="#9090dc" textLength="36.5" lengthAdjust="spacingAndGlyphs">More</text>
<line x1="1897.5" y1="825.4" x2="1934" y2="825.4" stroke="#a5a5e5" stroke-width="1"/>
<line x1="753" y1="831.0" x2="1959" y2="831.0" stroke="#eeeeee" stroke-width="1"/>
<rect x="765.5" y="846.5" width="3.00" height="3.00" fill="#555"/>
<rect x="770.3" y="846.5" width="3.00" height="3.00" fill="#555"/>
<rect x="775.1" y="846.5" width="3.00" height="3.00" fill="#555"/>
<circle cx="808" cy="848.00" r="8.3" fill="#4e9f22"/>
<circle cx="813.5" cy="853.50" r="3" fill="#b5654a"/>
<text x="828" y="854.5" font-size="16.5" fill="#858585" textLength="101.0" lengthAdjust="spacingAndGlyphs" stroke="#858585" stroke-width="0.22">N-WIN2012R2</text>
<text x="973" y="854.5" font-size="16.5" fill="#858585" textLength="31.0" lengthAdjust="spacingAndGlyphs" stroke="#858585" stroke-width="0.22">Ping</text>
<text x="1079" y="854.5" font-size="16.5" fill="#858585" textLength="166.0" lengthAdjust="spacingAndGlyphs" stroke="#858585" stroke-width="0.22">07/15/2022 11:36:12 ...</text>
<text x="1255" y="854.5" font-size="16.5" fill="#858585" textLength="47.0" lengthAdjust="spacingAndGlyphs" stroke="#858585" stroke-width="0.22">2 mins</text>
<rect x="1429" y="835.7" width="68.50" height="25.60" fill="#59a01c"/>
<text x="1507.5" y="854.5" font-size="16.5" fill="#858585" textLength="20.5" lengthAdjust="spacingAndGlyphs" stroke="#858585" stroke-width="0.22">Up</text>
<line x1="753" y1="863.5" x2="1959" y2="863.5" stroke="#eeeeee" stroke-width="1"/>
<rect x="765.5" y="879.0" width="3.00" height="3.00" fill="#555"/>
<rect x="770.3" y="879.0" width="3.00" height="3.00" fill="#555"/>
<rect x="775.1" y="879.0" width="3.00" height="3.00" fill="#555"/>
<circle cx="808" cy="880.50" r="8.3" fill="#4e9f22"/>
<text x="828" y="887.1" font-size="16.5" fill="#858585" textLength="130.0" lengthAdjust="spacingAndGlyphs" stroke="#858585" stroke-width="0.22">APM00162805092</text>
<text x="973" y="887.1" font-size="16.5" fill="#858585" textLength="92.0" lengthAdjust="spacingAndGlyphs" stroke="#858585" stroke-width="0.22">Storage Ha...</text>
<text x="1079" y="887.1" font-size="16.5" fill="#858585" textLength="166.0" lengthAdjust="spacingAndGlyphs" stroke="#858585" stroke-width="0.22">07/15/2022 11:35:46 ...</text>
<text x="1255" y="887.1" font-size="16.5" fill="#858585" textLength="47.0" lengthAdjust="spacingAndGlyphs" stroke="#858585" stroke-width="0.22">5 mins</text>
<rect x="1429" y="868.2" width="68.50" height="25.60" fill="#59a01c"/>
<text x="1507.5" y="887.1" font-size="16.5" fill="#858585" textLength="122.5" lengthAdjust="spacingAndGlyphs" stroke="#858585" stroke-width="0.22">Up at least 5 min</text>
<text x="1681" y="887.1" font-size="16.5" fill="#858585" textLength="212.0" lengthAdjust="spacingAndGlyphs" stroke="#858585" stroke-width="0.22">Storage Hard Disk Drive:Payl.</text>
<text x="1897.5" y="888.6" font-size="13.5" fill="#9090dc" textLength="36.5" lengthAdjust="spacingAndGlyphs">More</text>
<line x1="1897.5" y1="890.5999999999999" x2="1934" y2="890.5999999999999" stroke="#a5a5e5" stroke-width="1"/>
<line x1="753" y1="896.0" x2="1959" y2="896.0" stroke="#eeeeee" stroke-width="1"/>
<rect x="765.5" y="911.5" width="3.00" height="3.00" fill="#555"/>
<rect x="770.3" y="911.5" width="3.00" height="3.00" fill="#555"/>
<rect x="775.1" y="911.5" width="3.00" height="3.00" fill="#555"/>
<circle cx="808" cy="913.00" r="8.3" fill="#4e9f22"/>
<circle cx="813.5" cy="918.50" r="3" fill="#b5654a"/>
<text x="828" y="919.7" font-size="16.5" fill="#858585" textLength="101.0" lengthAdjust="spacingAndGlyphs" stroke="#858585" stroke-width="0.22">N-WIN2012R2</text>
<text x="973" y="919.7" font-size="16.5" fill="#858585" textLength="31.0" lengthAdjust="spacingAndGlyphs" stroke="#858585" stroke-width="0.22">Ping</text>
<text x="1079" y="919.7" font-size="16.5" fill="#858585" textLength="166.0" lengthAdjust="spacingAndGlyphs" stroke="#858585" stroke-width="0.22">07/15/2022 11:35:02 ...</text>
<text x="1255" y="919.7" font-size="16.5" fill="#858585" textLength="40.0" lengthAdjust="spacingAndGlyphs" stroke="#858585" stroke-width="0.22">1 min</text>
<rect x="1429" y="900.7" width="68.50" height="25.60" fill="#ee553e"/>
<text x="1507.5" y="919.7" font-size="16.5" fill="#858585" textLength="42.5" lengthAdjust="spacingAndGlyphs" stroke="#858585" stroke-width="0.22">Down</text>
<text x="1681" y="919.7" font-size="16.5" fill="#858585" textLength="214.0" lengthAdjust="spacingAndGlyphs" stroke="#858585" stroke-width="0.22">Ping 10.225.64.18 failed. Erro</text>
<text x="1897.5" y="921.2" font-size="13.5" fill="#9090dc" textLength="36.5" lengthAdjust="spacingAndGlyphs">More</text>
<line x1="1897.5" y1="923.2" x2="1934" y2="923.2" stroke="#a5a5e5" stroke-width="1"/>
<line x1="753" y1="928.5" x2="1959" y2="928.5" stroke="#eeeeee" stroke-width="1"/>
<rect x="740.5" y="953.5" width="1231" height="56" fill="#fff" stroke="#e3e3e3" stroke-width="1.5"/>
<rect x="741" y="954" width="1230.00" height="40.00" fill="#efefef"/>
<line x1="741" y1="994" x2="1971" y2="994" stroke="#e6e6e6" stroke-width="1"/>
<path d="M756.5,964.0 L763.5,972 L770.5,964.0" fill="none" stroke="#6e6e6e" stroke-width="3.4"/>
<text x="781.5" y="985.7" font-size="16.5" fill="#555" textLength="173.5" lengthAdjust="spacingAndGlyphs" stroke="#555" stroke-width="0.35">Down Active Monitors</text>
<circle cx="1921.5" cy="966" r="5.10" fill="none" stroke="#7c7c7c" stroke-width="4.2"/>
<circle cx="1927.87" cy="968.64" r="1.5" fill="#7c7c7c"/>
<circle cx="1924.14" cy="972.37" r="1.5" fill="#7c7c7c"/>
<circle cx="1918.86" cy="972.37" r="1.5" fill="#7c7c7c"/>
<circle cx="1915.13" cy="968.64" r="1.5" fill="#7c7c7c"/>
<circle cx="1915.13" cy="963.36" r="1.5" fill="#7c7c7c"/>
<circle cx="1918.86" cy="959.63" r="1.5" fill="#7c7c7c"/>
<circle cx="1924.14" cy="959.63" r="1.5" fill="#7c7c7c"/>
<circle cx="1927.87" cy="963.36" r="1.5" fill="#7c7c7c"/>
<rect x="1941.5" y="961.0" width="14.00" height="3.00" fill="#8a8a8a"/>
<rect x="1941.5" y="966.0" width="12.00" height="3.00" fill="#8a8a8a"/>
<rect x="1941.5" y="971.0" width="11.00" height="3.00" fill="#8a8a8a"/>
<rect x="1957.5" y="961.0" width="3.00" height="4.00" fill="#8a8a8a"/>
<rect x="1978.5" y="478" width="18.50" height="530.00" fill="#f2f2f2"/>
<polygon points="1984.5,492 1991.5,492 1988,488" fill="#666"/>
<rect x="1979.5" y="500" width="15.50" height="55.00" fill="#c3c3c3"/>
<polygon points="1984.5,994 1991.5,994 1988,998.5" fill="#555"/>
<rect x="3" y="1008" width="1994.00" height="39.50" fill="#4f4e52"/>
<rect x="3" y="1008" width="1994.00" height="2.50" fill="#616063"/>
<rect x="3" y="1047" width="1994.00" height="2.50" fill="#a2a2a4"/>
<rect x="3" y="1008" width="126.50" height="39.50" fill="#057e8c"/>
<rect x="3" y="1008" width="126.50" height="2.50" fill="#3f9aa4"/>
<rect x="26.5" y="1023" width="15.00" height="14.50" fill="#4fb4d8"/>
<rect x="33" y="1026" width="2.50" height="8.50" fill="#e8f8ff"/>
<text x="51" y="1037" font-size="16" fill="#c5f0f7" textLength="52.0" lengthAdjust="spacingAndGlyphs" stroke="#c5f0f7" stroke-width="0.35">DEVICE</text>
<circle cx="145.3" cy="1030.5" r="8.3" fill="#4eae2c"/>
<text x="163" y="1037" font-size="16" fill="#f2f2f2" textLength="102.5" lengthAdjust="spacingAndGlyphs" stroke="#f2f2f2" stroke-width="0.35">QA-LAP1262N</text>
<rect x="278" y="1022" width="2.00" height="17.00" fill="#bdbdbd"/>
<path d="M299,1020 L306,1028 L301.5,1028 L301.5,1038 L296.5,1038 L296.5,1028 L292,1028 Z" fill="#4eae2c"/>
<text x="314.5" y="1037" font-size="16" fill="#f2f2f2" textLength="16.5" lengthAdjust="spacingAndGlyphs" stroke="#f2f2f2" stroke-width="0.35">&gt;&gt;</text>
<text x="339.5" y="1037" font-size="16" fill="#f2f2f2" textLength="86.5" lengthAdjust="spacingAndGlyphs" stroke="#f2f2f2" stroke-width="0.35">Device is up</text>
<text x="431" y="1037" font-size="16" fill="#9a9a9a" textLength="81.5" lengthAdjust="spacingAndGlyphs" stroke="#9a9a9a" stroke-width="0.35">[1 min ago]</text>
<text x="1699" y="1037.6" font-size="16.5" fill="#2397a5" textLength="36.0" lengthAdjust="spacingAndGlyphs" stroke="#2397a5" stroke-width="0.6">Clear</text>
<circle cx="1772.8" cy="1028.5" r="9.5" fill="#e35a4c"/>
<rect x="1771.3" y="1022" width="3.00" height="13.00" fill="#ffd8d0"/>
<text x="1789" y="1037.6" font-size="16" fill="#e8e8e8" textLength="18.0" lengthAdjust="spacingAndGlyphs" stroke="#e8e8e8" stroke-width="0.35">44</text>
<polygon points="1842.5,1018.5 1853,1037 1832,1037" fill="#f1ae1f"/>
<text x="1858.5" y="1037.6" font-size="16" fill="#e8e8e8" textLength="17.5" lengthAdjust="spacingAndGlyphs" stroke="#e8e8e8" stroke-width="0.35">10</text>
<rect x="1902.5" y="1021" width="18.50" height="16.00" fill="#1e9cc6"/>
<rect x="1910" y="1024" width="3.00" height="10.00" fill="#bff0ff"/>
<text x="1925.5" y="1037.6" font-size="16" fill="#e8e8e8" textLength="19.5" lengthAdjust="spacingAndGlyphs" stroke="#e8e8e8" stroke-width="0.35">42</text>
<circle cx="1979.5" cy="1028" r="5.60" fill="none" stroke="#f4f4f4" stroke-width="4.2"/>
<circle cx="1986.34" cy="1030.83" r="1.5" fill="#f4f4f4"/>
<circle cx="1982.33" cy="1034.84" r="1.5" fill="#f4f4f4"/>
<circle cx="1976.67" cy="1034.84" r="1.5" fill="#f4f4f4"/>
<circle cx="1972.66" cy="1030.83" r="1.5" fill="#f4f4f4"/>
<circle cx="1972.66" cy="1025.17" r="1.5" fill="#f4f4f4"/>
<circle cx="1976.67" cy="1021.16" r="1.5" fill="#f4f4f4"/>
<circle cx="1982.33" cy="1021.16" r="1.5" fill="#f4f4f4"/>
<circle cx="1986.34" cy="1025.17" r="1.5" fill="#f4f4f4"/>
<rect x="0" y="0" width="2000.00" height="3.00" fill="#cfd3d6"/>
<rect x="0" y="1155" width="2000.00" height="3.00" fill="#cfd3d6"/>
<rect x="0" y="0" width="3.00" height="1158.00" fill="#cfd3d6"/>
<rect x="1997" y="0" width="3.00" height="1158.00" fill="#cfd3d6"/>
</svg>
<div class="fr"></div><div class="nl"></div>
</body></html>
